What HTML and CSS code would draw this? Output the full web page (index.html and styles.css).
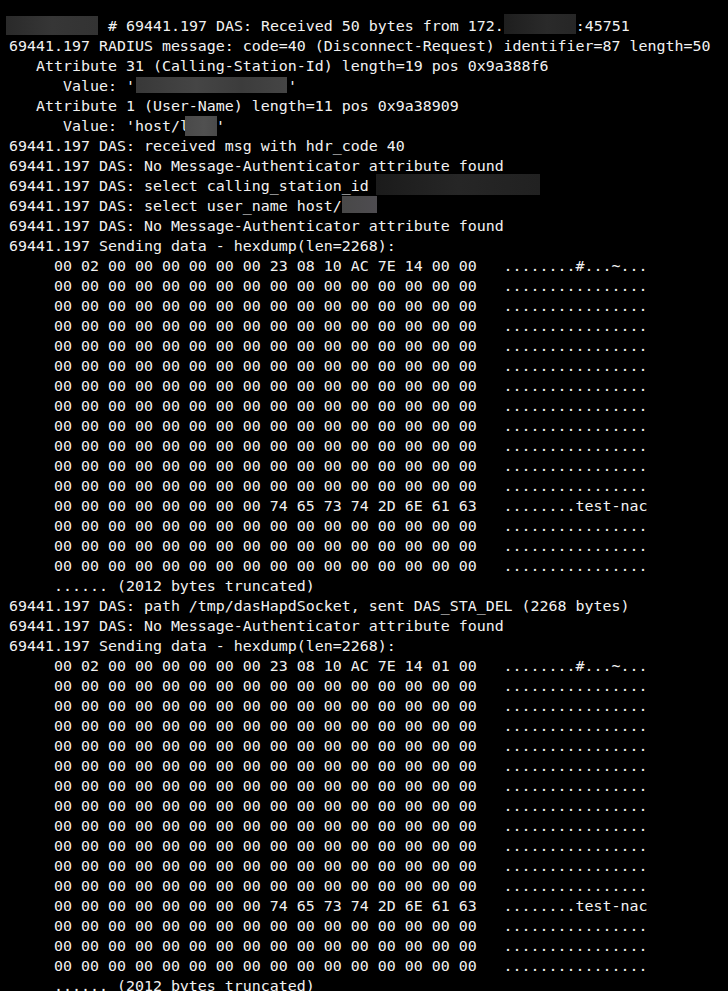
FILE: index.html
```html
<!DOCTYPE html>
<html lang="en">
<head>
<meta charset="utf-8">
<title>Terminal log</title>
<link rel="stylesheet" href="styles.css">
</head>
<body>
<pre class="term"><span class="redact r-host"></span># 69441.197 DAS: Received 50 bytes from 172.<span class="redact r-ip"></span>:45751
69441.197 RADIUS message: code=40 (Disconnect-Request) identifier=87 length=50
   Attribute 31 (Calling-Station-Id) length=19 pos 0x9a388f6
      Value: '<span class="redact r-mac"></span>'
   Attribute 1 (User-Name) length=11 pos 0x9a38909
      Value: 'host/<span class="redact-l">l</span>'
69441.197 DAS: received msg with hdr_code 40
69441.197 DAS: No Message-Authenticator attribute found
69441.197 DAS: select calling_station_id <span class="redact r-csid"></span>
69441.197 DAS: select user_name host/<span class="redact r-user"></span>
69441.197 DAS: No Message-Authenticator attribute found
69441.197 Sending data - hexdump(len=2268):
     00 02 00 00 00 00 00 00 23 08 10 AC 7E 14 00 00   ........#...~...
     00 00 00 00 00 00 00 00 00 00 00 00 00 00 00 00   ................
     00 00 00 00 00 00 00 00 00 00 00 00 00 00 00 00   ................
     00 00 00 00 00 00 00 00 00 00 00 00 00 00 00 00   ................
     00 00 00 00 00 00 00 00 00 00 00 00 00 00 00 00   ................
     00 00 00 00 00 00 00 00 00 00 00 00 00 00 00 00   ................
     00 00 00 00 00 00 00 00 00 00 00 00 00 00 00 00   ................
     00 00 00 00 00 00 00 00 00 00 00 00 00 00 00 00   ................
     00 00 00 00 00 00 00 00 00 00 00 00 00 00 00 00   ................
     00 00 00 00 00 00 00 00 00 00 00 00 00 00 00 00   ................
     00 00 00 00 00 00 00 00 00 00 00 00 00 00 00 00   ................
     00 00 00 00 00 00 00 00 00 00 00 00 00 00 00 00   ................
     00 00 00 00 00 00 00 00 74 65 73 74 2D 6E 61 63   ........test-nac
     00 00 00 00 00 00 00 00 00 00 00 00 00 00 00 00   ................
     00 00 00 00 00 00 00 00 00 00 00 00 00 00 00 00   ................
     00 00 00 00 00 00 00 00 00 00 00 00 00 00 00 00   ................
     ...... (2012 bytes truncated)
69441.197 DAS: path /tmp/dasHapdSocket, sent DAS_STA_DEL (2268 bytes)
69441.197 DAS: No Message-Authenticator attribute found
69441.197 Sending data - hexdump(len=2268):
     00 02 00 00 00 00 00 00 23 08 10 AC 7E 14 01 00   ........#...~...
     00 00 00 00 00 00 00 00 00 00 00 00 00 00 00 00   ................
     00 00 00 00 00 00 00 00 00 00 00 00 00 00 00 00   ................
     00 00 00 00 00 00 00 00 00 00 00 00 00 00 00 00   ................
     00 00 00 00 00 00 00 00 00 00 00 00 00 00 00 00   ................
     00 00 00 00 00 00 00 00 00 00 00 00 00 00 00 00   ................
     00 00 00 00 00 00 00 00 00 00 00 00 00 00 00 00   ................
     00 00 00 00 00 00 00 00 00 00 00 00 00 00 00 00   ................
     00 00 00 00 00 00 00 00 00 00 00 00 00 00 00 00   ................
     00 00 00 00 00 00 00 00 00 00 00 00 00 00 00 00   ................
     00 00 00 00 00 00 00 00 00 00 00 00 00 00 00 00   ................
     00 00 00 00 00 00 00 00 00 00 00 00 00 00 00 00   ................
     00 00 00 00 00 00 00 00 74 65 73 74 2D 6E 61 63   ........test-nac
     00 00 00 00 00 00 00 00 00 00 00 00 00 00 00 00   ................
     00 00 00 00 00 00 00 00 00 00 00 00 00 00 00 00   ................
     00 00 00 00 00 00 00 00 00 00 00 00 00 00 00 00   ................
     ...... (2012 bytes truncated)</pre>
</body>
</html>
```

FILE: styles.css
```css
html, body {
  margin: 0;
  padding: 0;
  background: #000000;
}

body {
  overflow: hidden;
}

.term {
  margin: 0;
  padding: 16px 0 0 9px;
  font-family: "DejaVu Sans Mono", "Liberation Mono", monospace;
  font-size: 14.95px;
  line-height: 20px;
  color: #f2f2f2;
  background: #000000;
  white-space: pre;
}

.redact {
  display: inline-block;
  vertical-align: top;
}

.r-host {
  width: 92px;
  height: 19px;
  margin-left: -3px;
  margin-right: 10px;
  background: linear-gradient(90deg, #2a2a2a 0%, #363636 50%, #333333 100%);
}

.r-ip {
  width: 72px;
  height: 20px;
  margin-top: -2px;
  background: linear-gradient(90deg, #1e1e1e 0%, #2a2a2a 60%, #262626 100%);
}

.r-mac {
  width: 151px;
  height: 16px;
  margin-top: 1px;
  margin-left: 1px;
  margin-right: 1px;
  background: linear-gradient(90deg, #383838 0%, #454545 40%, #3c3c3c 70%, #454545 100%);
}

.redact-l {
  display: inline-block;
  position: relative;
  width: 36px;
  vertical-align: top;
}

.redact-l::after {
  content: "";
  position: absolute;
  left: 5px;
  top: 0;
  width: 32px;
  height: 20px;
  background: linear-gradient(90deg, #4a4a4a 0%, #505050 60%, #4a4a4a 100%);
}

.r-csid {
  width: 164px;
  height: 21px;
  margin-top: -2px;
  margin-left: -2px;
  background: linear-gradient(90deg, #1b1b1b 0%, #262626 50%, #212121 100%);
}

.r-user {
  width: 35px;
  height: 17px;
  background: linear-gradient(90deg, #484848 0%, #4e4c50 100%);
}
```
